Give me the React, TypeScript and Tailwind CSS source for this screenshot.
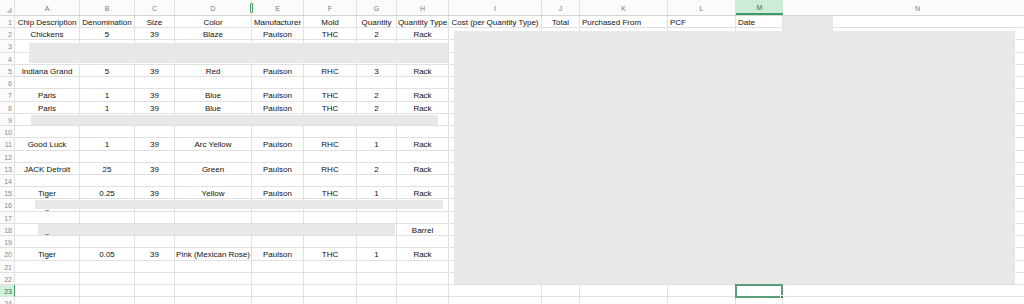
import React from "react";

const colW = [
  "w-[65px]",
  "w-[55px]",
  "w-[40px]",
  "w-[77px]",
  "w-[52px]",
  "w-[53px]",
  "w-[40px]",
  "w-[52px]",
  "w-[93px]",
  "w-[38px]",
  "w-[88px]",
  "w-[68px]",
  "w-[47px]",
  "w-[270px]",
];

const letters = ["A", "B", "C", "D", "E", "F", "G", "H", "I", "J", "K", "L", "M", "N"];

const rowH: Record<number, string> = {
  1: "h-[12px]", 2: "h-[12px]", 3: "h-[13px]", 4: "h-[12px]", 5: "h-[12px]", 6: "h-[12px]",
  7: "h-[13px]", 8: "h-[12px]", 9: "h-[12px]", 10: "h-[12px]", 11: "h-[13px]", 12: "h-[12px]",
  13: "h-[12px]", 14: "h-[12px]", 15: "h-[12px]", 16: "h-[13px]", 17: "h-[12px]", 18: "h-[12px]",
  19: "h-[12px]", 20: "h-[13px]", 21: "h-[12px]", 22: "h-[12px]", 23: "h-[12px]", 24: "h-[12px]",
};

const data: Record<number, string[]> = {
  1: ["Chip Description", "Denomination", "Size", "Color", "Manufacturer", "Mold", "Quantity", "Quantity Type", "Cost (per Quantity Type)", "Total", "Purchased From", "PCF", "Date", ""],
  2: ["Chickens", "5", "39", "Blaze", "Paulson", "THC", "2", "Rack"],
  5: ["Indiana Grand", "5", "39", "Red", "Paulson", "RHC", "3", "Rack"],
  7: ["Paris", "1", "39", "Blue", "Paulson", "THC", "2", "Rack"],
  8: ["Paris", "1", "39", "Blue", "Paulson", "THC", "2", "Rack"],
  11: ["Good Luck", "1", "39", "Arc Yellow", "Paulson", "RHC", "1", "Rack"],
  13: ["JACK Detroit", "25", "39", "Green", "Paulson", "RHC", "2", "Rack"],
  15: ["Tiger", "0.25", "39", "Yellow", "Paulson", "THC", "1", "Rack"],
  18: ["", "", "", "", "", "", "", "Barrel"],
  20: ["Tiger", "0.05", "39", "Pink (Mexican Rose)", "Paulson", "THC", "1", "Rack"],
};

const rows = Array.from({ length: 24 }, (_, i) => i + 1);

export default function App() {
  return (
    <div
      className="relative w-[1024px] h-[304px] overflow-hidden bg-white text-[8px] leading-none text-[#111]"
      style={{ fontFamily: '"Liberation Sans", Arial, sans-serif' }}
    >
      {/* column headers */}
      <div className="flex h-[16px] border-b border-[#d4d4d4] bg-[#fbfbfb]">
        <div className="w-[15px] shrink-0 border-r border-[#e1e1e1] relative">
          <div className="absolute right-[2px] bottom-[2px] w-0 h-0 border-l-[6px] border-l-transparent border-b-[6px] border-b-[#c8c8c8]" />
        </div>
        {letters.map((l, i) => (
          <div
            key={l}
            className={`${colW[i]} shrink-0 flex items-center justify-center pt-[1px] text-[7px] ${
              l === "M"
                ? "bg-[#cdebd9] text-[#2b7a4b] border-b-2 border-[#3f9a66]"
                : "text-[#7a7a7a] border-r border-[#e1e1e1]"
            }`}
          >
            {l}
          </div>
        ))}
      </div>

      {/* rows */}
      {rows.map((r) => {
        const vals = data[r] || [];
        return (
          <div key={r} className={`flex ${rowH[r]}`}>
            <div
              className={`w-[15px] shrink-0 flex items-center justify-end pr-[2px] pt-[1px] text-[7px] border-r border-b ${
                r === 23
                  ? "bg-[#d3efdf] text-[#2b7a4b] border-r-[#3f9a66] border-b-[#e1e1e1]"
                  : "bg-[#fbfbfb] text-[#888] border-[#e1e1e1]"
              }`}
            >
              {r}
            </div>
            {letters.map((l, i) => {
              const v = vals[i] || "";
              const left = r === 1 && (l === "K" || l === "L" || l === "M");
              return (
                <div
                  key={l}
                  className={`${colW[i]} shrink-0 flex items-center pt-[2px] border-r border-b border-[#e1e1e1] whitespace-nowrap overflow-visible ${
                    left ? "justify-start pl-[2px]" : "justify-center"
                  }`}
                >
                  {v}
                </div>
              );
            })}
          </div>
        );
      })}

      {/* hidden column marker between D and E */}
      <div className="absolute left-[250px] top-[3px] w-[3px] h-[10px] rounded-[1px] border border-[#4fa36f]" />

      {/* selected cell M23 */}
      <div className="absolute left-[735px] top-[284px] w-[48px] h-[14px] border-2 border-[#5b9e78]" />
      <div className="absolute left-[780px] top-[295px] w-[4px] h-[4px] bg-[#2f7d50] border border-white" />

      {/* redaction overlays */}
      <div className="absolute left-[29px] top-[43px] w-[419px] h-[20px] bg-[#e8e8e8]" />
      <div className="absolute left-[454px] top-[31px] w-[561px] h-[253px] bg-[#e8e8e8]" />
      <div className="absolute left-[783px] top-[16px] w-[50px] h-[15px] bg-[#e8e8e8]" />
      <div className="absolute left-[31px] top-[115px] w-[407px] h-[10px] bg-[#e8e8e8]" />
      <div className="absolute left-[35px] top-[200px] w-[408px] h-[9px] bg-[#e8e8e8]" />
      <div className="absolute left-[38px] top-[224px] w-[357px] h-[11px] bg-[#e8e8e8]" />
      <div className="absolute left-[45px] top-[210px] w-[4px] h-[1px] bg-[#999]" />
      <div className="absolute left-[45px] top-[234px] w-[4px] h-[1px] bg-[#999]" />
    </div>
  );
}
